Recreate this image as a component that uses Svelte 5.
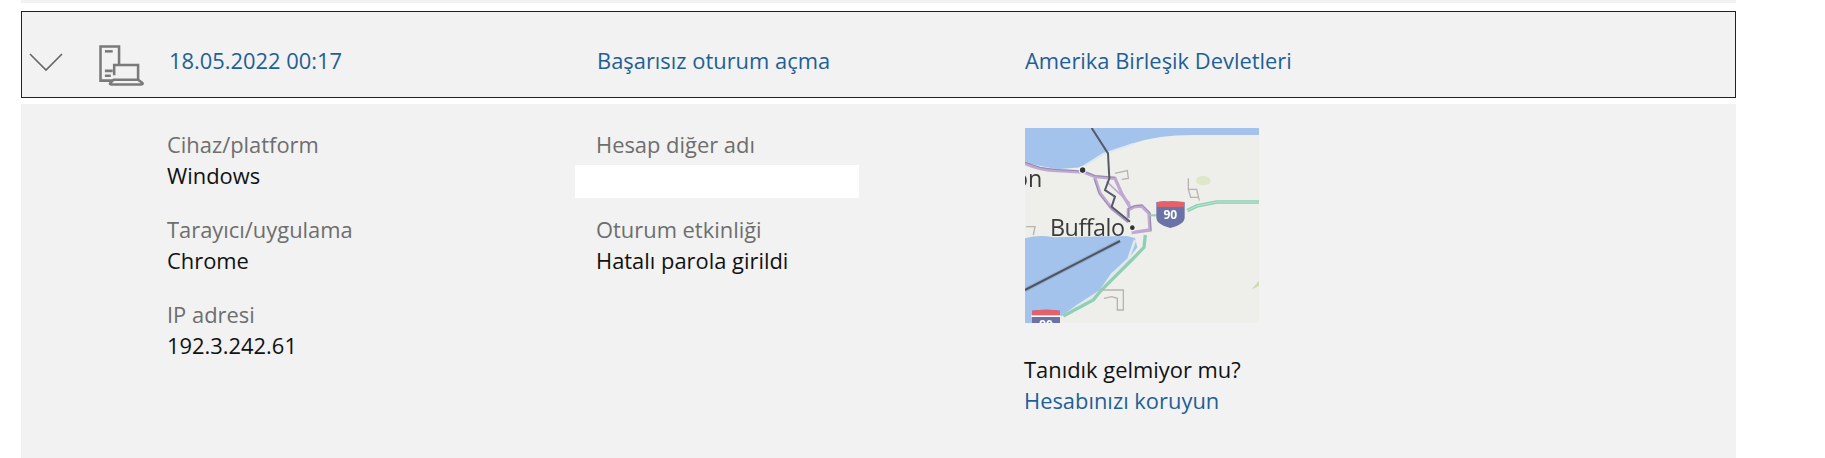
<script>
  const left = [
    { label: 'Cihaz/platform', value: 'Windows' },
    { label: 'Tarayıcı/uygulama', value: 'Chrome' },
    { label: 'IP adresi', value: '192.3.242.61' }
  ];
</script>

<div class="page">
  <div class="strip"></div>
  <div class="row">
    <svg class="chevron" viewBox="0 0 34 20" width="34" height="20" aria-hidden="true">
      <path d="M1 2 L17 18 L33 2" fill="none" stroke="#666" stroke-width="1.6" />
    </svg>
    <svg class="device" viewBox="0 0 46 42" width="45" height="41" aria-hidden="true">
      <g fill="none" stroke="#7a7a7a" stroke-width="2.6">
        <path d="M14 36.5 H1.5 V1.5 H20.5 V20" />
        <path d="M6 6.5 H14" />
        <path d="M6 26.5 H14 M6 31.5 H12" />
        <path d="M15.5 31 V20.5 H40 V35.5" />
        <path d="M15 35.5 H40 L44.5 39 Q45 40.5 43 40.5 H13 Q10.5 40.5 11.5 39 Z" />
      </g>
    </svg>
    <div class="head-col first">18.05.2022 00:17</div>
    <div class="head-col">Başarısız oturum açma</div>
    <div class="head-col">Amerika Birleşik Devletleri</div>
  </div>

  <div class="panel">
    <div class="col first-col">
      {#each left as item}
        <div class="item">
          <div class="label">{item.label}</div>
          <div class="value">{item.value}</div>
        </div>
      {/each}
    </div>
    <div class="col second-col">
      <div class="item">
        <div class="label">Hesap diğer adı</div>
        <div class="value blank"></div>
      </div>
      <div class="item">
        <div class="label">Oturum etkinliği</div>
        <div class="value">Hatalı parola girildi</div>
      </div>
    </div>
    <div class="col third-col">
      <svg class="map" viewBox="75 54 702 585" width="234" height="195" role="img" aria-label="Buffalo haritası">
        <rect x="75" y="54" width="702" height="585" fill="#eeeeeb" />
        <path d="M75 54 H777 V75 H600 Q480 72 400 100 L310 135 L245 172 L170 178 L75 158 Z" fill="#a3c3ec" />
        <path d="M75 385 Q120 372 160 382 L380 378 L405 384 L412 412 L385 448 L335 490 L300 540 L230 585 L180 622 L175 639 H75 Z" fill="#a3c3ec" />
        <path d="M240 176 L310 132 L400 102" fill="none" stroke="#dfe9f4" stroke-width="6" />
        <path d="M405 390 L385 448 L335 495 L300 545 L190 618" fill="none" stroke="#dde9ea" stroke-width="8" />

        <g fill="none" stroke="#bfa9d2" stroke-width="10">
          <path d="M75 160 Q120 180 170 182 L250 186 L285 200 L345 205 L365 250 L395 300" />
          <path d="M285 205 L300 250 L335 295 L385 335" />
          <path d="M385 325 V298 Q400 288 425 288 L447 310 L450 360 L395 368" />
          <path d="M320 215 L390 280" stroke-width="5" />
        </g>
        <g fill="none" stroke="#8c82a0" stroke-width="2.5">
          <path d="M75 157 Q120 177 170 179 L250 183 L285 197 L345 202" />
          <path d="M282 205 L297 250 L332 295 L385 338" />
          <path d="M385 320 V296 Q400 285 427 285 L450 308 L453 362" />
        </g>

        <path d="M275 54 L324 130 L328 205 L315 240 L345 260 L335 290 L390 335" fill="none" stroke="#565a66" stroke-width="6" />
        <path d="M75 540 L360 393" fill="none" stroke="#9db0c9" stroke-width="13" />
        <path d="M75 540 L360 393" fill="none" stroke="#48566b" stroke-width="6" />

        <path d="M436 375 L432 412 L395 450 L345 500 L300 545 L280 570 L190 618" fill="none" stroke="#8fd0b4" stroke-width="10" />
        <path d="M777 276 H650 L590 288 L562 302" fill="none" stroke="#8fd0b4" stroke-width="11" />
        <path d="M777 276 H650 L590 288 L562 302" fill="none" stroke="#d4efe2" stroke-width="2" />
        <path d="M448 316 H470" stroke="#8fd0b4" stroke-width="6" />

        <g fill="none" stroke="#b8b4ad" stroke-width="4">
          <path d="M345 190 L382 182 L385 205 L365 208" />
          <path d="M565 205 V238 H590 L598 272 M565 238 L572 262 H595" />
          <path d="M305 540 H370 V600 H352 V565 L335 560 L312 565" />
          <path d="M78 350 L105 350 L100 375" />
        </g>
        <ellipse cx="610" cy="212" rx="22" ry="14" fill="#dfe6c9" />
        <path d="M755 538 L777 512 V528 Z" fill="#cfdcb0" />

        <path d="M469 276 H554 V322 Q554 344 511 354 Q469 344 469 322 Z" fill="#6b73a6" />
        <path d="M471 276 Q490 272 500 274 Q520 272 552 276 V291 H471 Z" fill="#e2616a" />
        <text x="511" y="328" class="shield">90</text>
        <path d="M96 602 Q140 596 180 602 V639 H96 Z" fill="#6b73a6" />
        <path d="M96 602 Q140 596 180 602 V616 H96 Z" fill="#e2616a" />
        <rect x="94" y="616" width="88" height="5" fill="#fff" />
        <text x="138" y="656" class="shield">90</text>

        <circle cx="248" cy="180" r="8" fill="#333" />
        <circle cx="248" cy="180" r="11" fill="none" stroke="#f2f2f2" stroke-width="3" />
        <circle cx="397" cy="353" r="7" fill="#333" />
        <circle cx="397" cy="353" r="10" fill="none" stroke="#f2f2f2" stroke-width="3" />

        <text x="150" y="379" class="city tight">Buffalo</text>
        <text x="42" y="232" class="city">on</text>
      </svg>
      <div class="help">
        <div class="value">Tanıdık gelmiyor mu?</div>
        <div class="link">Hesabınızı koruyun</div>
      </div>
    </div>
  </div>
</div>

<style>
  :global(body) {
    margin: 0;
    background: #fff;
  }

  .page {
    width: 1825px;
    height: 458px;
    overflow: hidden;
    font-family: "Open Sans", "Noto Sans", sans-serif;
    font-size: 21.9px;
    line-height: 31px;
  }

  .strip {
    width: 1715px;
    height: 3px;
    margin: 0 0 8px 21px;
    background: #f2f2f2;
  }

  .row {
    box-sizing: border-box;
    width: 1715px;
    height: 87px;
    margin-left: 21px;
    padding-top: 12px;
    display: flex;
    align-items: center;
    background: #f2f2f2;
    border: 1px solid #222;
  }

  .chevron {
    margin-left: 7px;
    margin-top: 3px;
    flex: none;
  }

  .device {
    margin-left: 36px;
    margin-top: 9px;
    flex: none;
  }

  .head-col {
    width: 428px;
    flex: none;
    color: #1f5f96;
  }

  .head-col.first {
    margin-left: 25px;
  }

  .panel {
    width: 1715px;
    height: 354px;
    margin: 6px 0 0 21px;
    background: #f2f2f2;
    display: flex;
    box-sizing: border-box;
    padding-top: 25px;
  }

  .col {
    width: 428px;
    flex: none;
  }

  .first-col {
    margin-left: 146px;
  }

  .second-col {
    margin-left: 1px;
  }

  .item {
    margin-bottom: 23px;
  }

  .label {
    color: #6e6e6e;
  }

  .value {
    color: #111;
  }

  .blank {
    width: 284px;
    height: 33px;
    margin: 5px 0 -7px -21px;
    background: #fff;
  }

  .map {
    display: block;
    margin: -1px 0 0 1px;
    filter: blur(0.5px);
  }

  .help {
    margin-top: 31px;
  }

  .link {
    color: #1f5f96;
  }

  .city {
    font-size: 70px;
    fill: #3a3a3a;
    font-family: "Open Sans", sans-serif;
  }

  .tight {
    letter-spacing: -1.5px;
  }

  .shield {
    font-size: 36px;
    font-weight: 700;
    fill: #fff;
    text-anchor: middle;
    font-family: "Open Sans", sans-serif;
  }
</style>
